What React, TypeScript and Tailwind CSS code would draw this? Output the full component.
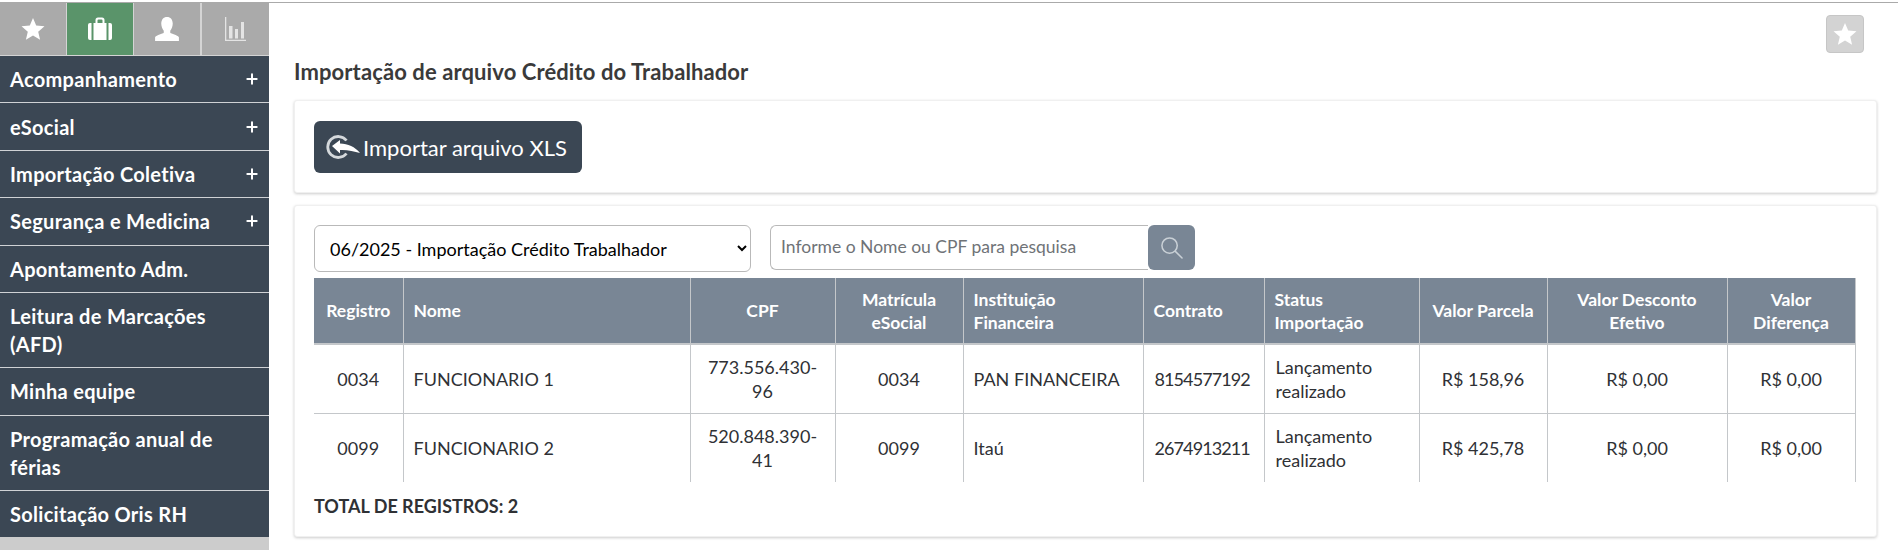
import { Plus } from 'lucide-react'

const FONT = "font-['Lato','Noto_Sans',sans-serif]"

const menu = [
  { label: 'Acompanhamento', plus: true },
  { label: 'eSocial', plus: true },
  { label: 'Importação Coletiva', plus: true },
  { label: 'Segurança e Medicina', plus: true },
  { label: 'Apontamento Adm.', plus: false },
  { label: 'Leitura de Marcações (AFD)', plus: false },
  { label: 'Minha equipe', plus: false },
  { label: 'Programação anual de férias', plus: false },
  { label: 'Solicitação Oris RH', plus: false },
]

const columns = [
  { label: 'Registro', width: 'w-[89px]', align: 'text-center', cell: 'px-[10px]' },
  { label: 'Nome', width: 'w-[287px]', align: 'text-left', cell: 'px-[10px]' },
  { label: 'CPF', width: 'w-[145px]', align: 'text-center', cell: 'px-[10px]' },
  { label: 'Matrícula eSocial', width: 'w-[128px]', align: 'text-center', cell: 'px-[10px]' },
  { label: 'Instituição Financeira', width: 'w-[180px]', align: 'text-left', cell: 'px-[10px]' },
  { label: 'Contrato', width: 'w-[121px]', align: 'text-left', cell: 'pl-[11px] pr-0 tracking-[-0.9px]' },
  { label: 'Status Importação', width: 'w-[155px]', align: 'text-left', cell: 'pl-[11px] pr-[10px]' },
  { label: 'Valor Parcela', width: 'w-[128px]', align: 'text-center', cell: 'px-[10px]' },
  { label: 'Valor Desconto Efetivo', width: 'w-[180px]', align: 'text-center', cell: 'px-[10px]' },
  { label: 'Valor Diferença', width: 'w-[128px]', align: 'text-center', cell: 'px-[10px]' },
]

const rows = [
  ['0034', 'FUNCIONARIO 1', '773.556.430-96', '0034', 'PAN FINANCEIRA', '8154577192', 'Lançamento realizado', 'R$ 158,96', 'R$ 0,00', 'R$ 0,00'],
  ['0099', 'FUNCIONARIO 2', '520.848.390-41', '0099', 'Itaú', '2674913211', 'Lançamento realizado', 'R$ 425,78', 'R$ 0,00', 'R$ 0,00'],
]

function StarIcon({ className }: { className: string }) {
  return (
    <svg viewBox="0 0 24 24" className={className} fill="currentColor">
      <path d="M12 1l3.200 7.600 8.300.7-6.300 5.400 1.900 8.100L12 18.500l-7.100 4.300 1.900-8.100L.5 9.300l8.300-.7z" />
    </svg>
  )
}

function CaseIcon() {
  return (
    <svg viewBox="0 0 24 24" className="w-6 h-6" fill="currentColor">
      <path d="M0 8q0-2 2-2h1.500v17H2q-2 0-2-2z" />
      <path d="M20.500 6H22q2 0 2 2v13q0 2-2 2h-1.500z" />
      <path
        fillRule="evenodd"
        d="M7.500 6V3q0-2.500 2.500-2.500h4q2.500 0 2.500 2.500v3h2V23h-13V6zM9.500 6h5V3.500q0-1-1-1h-3q-1 0-1 1z"
      />
    </svg>
  )
}

function UserIcon() {
  return (
    <svg viewBox="0 0 24 24" className="w-[26px] h-[26px]" fill="currentColor">
      <path d="M12 1c3.300 0 5.300 2.500 5.300 6 0 2.500-1 5-2.300 6.500v2c1 1 6.500 2 8 4V23H1v-3.500c1.500-2 7-3 8-4v-2C7.700 12 6.700 9.500 6.700 7c0-3.500 2-6 5.300-6z" />
    </svg>
  )
}

function ChartIcon() {
  return (
    <svg viewBox="0 0 21 24" className="w-[21px] h-6" fill="currentColor">
      <path d="M0 0h1.300v22.700H21V24H0z" />
      <path d="M4 9h3.500v12.500H4zM10 12h3v9.500h-3zM16 5h3v16.500h-3z" />
    </svg>
  )
}

function ImportIcon() {
  return (
    <svg viewBox="0 0 34 24" className="w-[34px] h-6 shrink-0">
      <path d="M20.500 5.500A10.500 10.500 0 1 0 20.500 18.500" fill="none" stroke="#d5d9dc" strokeWidth="2.800" />
      <path d="M6 11L14 5v3.500c8 0 15 3.500 20 9.500-6-2-14-3.500-20-3v3.500z" fill="#ffffff" />
    </svg>
  )
}

function SearchIcon() {
  return (
    <svg viewBox="0 0 24 24" className="w-[23px] h-[23px] text-[#c9d0d6]" fill="none" stroke="currentColor" strokeWidth="1.600">
      <circle cx="10" cy="10" r="8" />
      <path d="M16 16L23 23" strokeLinecap="round" />
    </svg>
  )
}

function Sidebar() {
  return (
    <aside className="w-[269px] shrink-0 bg-[#cccccc] flex flex-col">
      <div className="flex h-[53px] shrink-0 gap-px bg-[#d4d4d4] pb-px text-white">
        <div className="w-[66px] bg-[#aaaaaa] flex items-center justify-center"><StarIcon className="w-6 h-6" /></div>
        <div className="w-[66px] bg-[#5a946a] flex items-center justify-center"><CaseIcon /></div>
        <div className="w-[66px] bg-[#aaaaaa] flex items-center justify-center"><UserIcon /></div>
        <div className="flex-1 ml-px bg-[#aaaaaa] flex items-center justify-center text-[#e4e4e4]"><ChartIcon /></div>
      </div>
      {menu.map((item) => (
        <div
          key={item.label}
          className="bg-[#3b4754] border-b border-[#cfd2d5] last:border-b-0 pl-[10px] pr-[9px] py-[9.2px] flex items-center justify-between text-white text-[20px] leading-[28px] font-bold tracking-[0.3px]"
        >
          <span className="max-w-[238px]">{item.label}</span>
          {item.plus && <Plus className="w-4 h-4" strokeWidth={3} />}
        </div>
      ))}
    </aside>
  )
}

function RecordsTable() {
  return (
    <div className="h-[204px] overflow-hidden">
      <table className="w-[1541px] table-fixed border-collapse">
        <thead>
          <tr className="h-[66px] bg-[#798695] text-white">
            {columns.map((col) => (
              <th
                key={col.label}
                className={`${col.width} ${col.align} border-x border-b-2 border-[#c4c7ca] first:border-l-0 px-[10px] text-[17.5px] leading-[23px] font-bold`}
              >
                {col.label}
              </th>
            ))}
          </tr>
        </thead>
        <tbody>
          {rows.map((row) => (
            <tr key={row[0]} className="h-[69px] text-[#2f3135]">
              {row.map((cell, i) => (
                <td
                  key={i}
                  className={`${columns[i].align} ${columns[i].cell} border-x border-b border-[#c4c7ca] first:border-l-0 text-[18px] leading-[24px]`}
                >
                  {cell}
                </td>
              ))}
            </tr>
          ))}
        </tbody>
      </table>
    </div>
  )
}

export default function App() {
  return (
    <div className={`${FONT} w-[1898px] h-[550px] overflow-hidden bg-white pt-[2px]`}>
      <div className="border-t border-[#aaaaaa] h-[548px] flex">
        <Sidebar />
        <main className="flex-1 pl-[25px] pr-[21px] flex flex-col">
          <div className="h-[50px] shrink-0 flex justify-end items-start pt-[12px] pr-[13px]">
            <div className="w-[38px] h-[38px] rounded bg-[#d3d3d3] border border-[#c6c6c6] flex items-center justify-center text-white">
              <StarIcon className="w-6 h-6" />
            </div>
          </div>
          <h1 className="h-[47px] shrink-0 text-[22px] leading-[28px] font-bold tracking-[0.1px] text-[#3a3a3a] pt-[5px]">
            Importação de arquivo Crédito do Trabalhador
          </h1>
          <section className="h-[93px] shrink-0 rounded-[3px] bg-white border border-[#f0f0f0] shadow-[0_1px_3px_rgba(0,0,0,0.2)] px-[19px] pt-[20px]">
            <button className="h-[52px] w-[268px] rounded-[6px] bg-[#3b4754] text-white text-[22px] flex items-center gap-[3px] pl-[12px]">
              <ImportIcon />
              <span>Importar arquivo XLS</span>
            </button>
          </section>
          <section className="mt-[12px] h-[332px] shrink-0 rounded-[3px] bg-white border border-[#f0f0f0] shadow-[0_1px_3px_rgba(0,0,0,0.2)] px-[19px] pt-[19px]">
            <div className="flex h-[53px] items-start">
              <select className="w-[437px] h-[47px] rounded-[6px] border border-[#b9b9b9] bg-white pl-[11px] pr-[6px] text-[18px] text-black">
                <option>06/2025 - Importação Crédito Trabalhador</option>
              </select>
              <div className="ml-[19px] flex h-[45px]">
                <input
                  placeholder="Informe o Nome ou CPF para pesquisa"
                  className="w-[378px] rounded-l-[6px] border border-r-0 border-[#b9b9b9] px-[10px] text-[17.5px] placeholder:text-[#6f7377] outline-none"
                />
                <button className="w-[47px] rounded-[6px] bg-[#798695] flex items-center justify-center">
                  <SearchIcon />
                </button>
              </div>
            </div>
            <RecordsTable />
            <p className="mt-[12px] text-[18px] leading-[24px] font-bold text-[#2f3135]">TOTAL DE REGISTROS: 2</p>
          </section>
        </main>
      </div>
    </div>
  )
}
